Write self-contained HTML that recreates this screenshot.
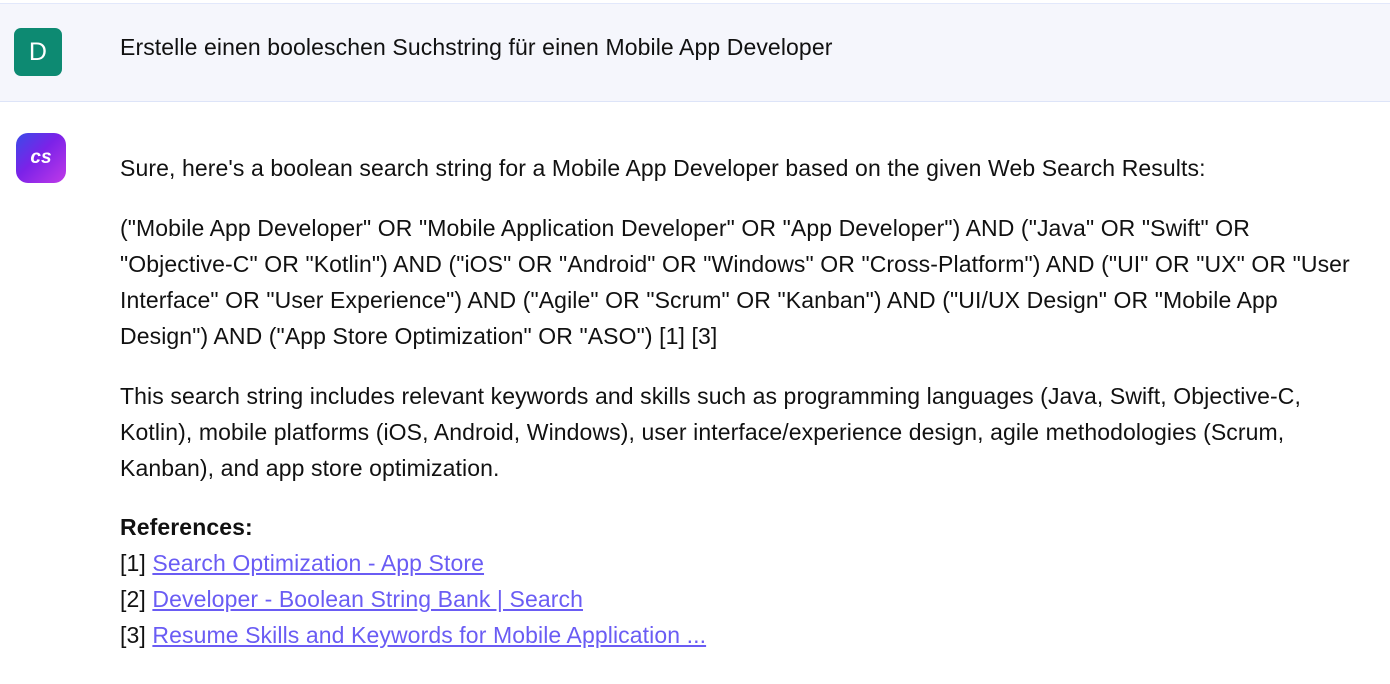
<!DOCTYPE html>
<html><head><meta charset="utf-8"><style>
html,body{margin:0;padding:0;background:#fff;width:1390px;height:684px;overflow:hidden}
body{font-family:"Liberation Sans",sans-serif;color:#111;font-size:23px;letter-spacing:0.1px}
.top{position:absolute;left:0;top:3px;width:1390px;height:97px;background:#f5f6fc;border-top:1px solid #e2e8fb;border-bottom:1px solid #dde4f8}
.d{position:absolute;left:14px;top:28px;width:48px;height:48px;border-radius:7px;background:#0d8a72;color:#fff;font-size:25px;text-align:center;line-height:48px}
.cs{position:absolute;left:16px;top:133px;width:50px;height:50px;border-radius:12px;background:linear-gradient(135deg,#3a4be8 0%,#7b22e8 45%,#c03ae8 100%);color:#fff;font-weight:bold;font-style:italic;font-size:19px;text-align:center;line-height:50px}
.l{position:absolute;left:120px;white-space:nowrap;line-height:36px}
a{color:#6a5cf4;text-decoration:underline}
</style></head><body>
<div class="top"></div>
<div class="d">D</div>
<div class="l" style="top:29px">Erstelle einen booleschen Suchstring für einen Mobile App Developer</div>
<div class="cs">cs</div>
<div class="l" style="top:150px">Sure, here's a boolean search string for a Mobile App Developer based on the given Web Search Results:</div>
<div class="l" style="top:210px">("Mobile App Developer" OR "Mobile Application Developer" OR "App Developer") AND ("Java" OR "Swift" OR<br>"Objective-C" OR "Kotlin") AND ("iOS" OR "Android" OR "Windows" OR "Cross-Platform") AND ("UI" OR "UX" OR "User<br>Interface" OR "User Experience") AND ("Agile" OR "Scrum" OR "Kanban") AND ("UI/UX Design" OR "Mobile App<br>Design") AND ("App Store Optimization" OR "ASO") [1] [3]</div>
<div class="l" style="top:378px">This search string includes relevant keywords and skills such as programming languages (Java, Swift, Objective-C,<br>Kotlin), mobile platforms (iOS, Android, Windows), user interface/experience design, agile methodologies (Scrum,<br>Kanban), and app store optimization.</div>
<div class="l" style="top:509px"><b>References:</b><br>[1] <a>Search Optimization - App Store</a><br>[2] <a>Developer - Boolean String Bank | Search</a><br>[3] <a>Resume Skills and Keywords for Mobile Application ...</a></div>
</body></html>
